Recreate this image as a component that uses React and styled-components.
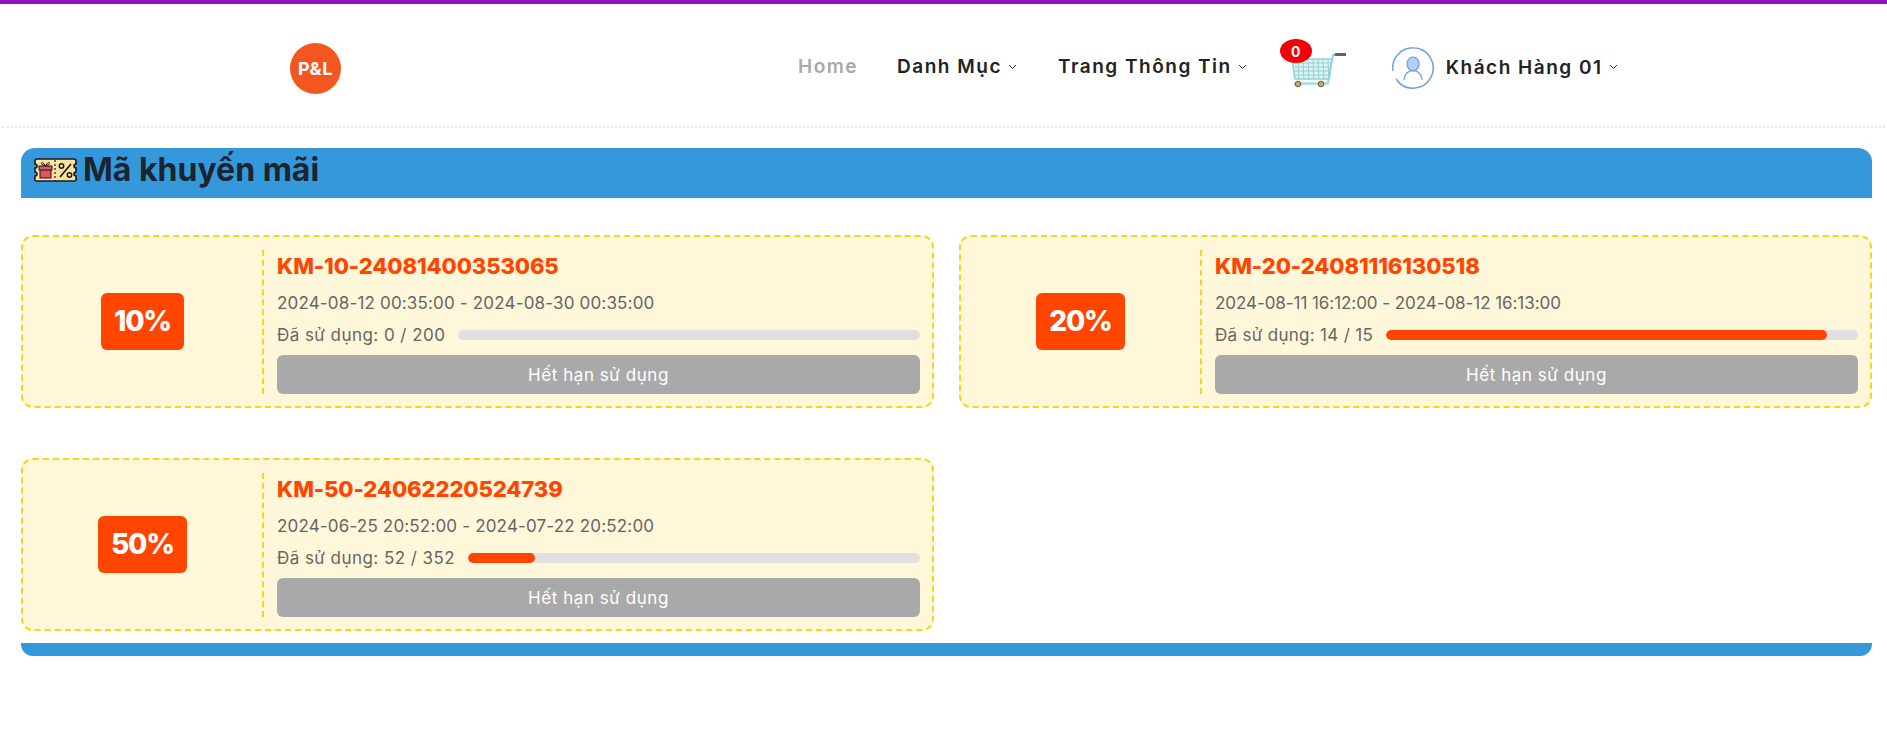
import React from "react";
import styled, { createGlobalStyle } from "styled-components";

const Global = createGlobalStyle`
  html, body { margin: 0; padding: 0; background: #fff; }
  body { font-family: Inter, "Open Sans", "Liberation Sans", sans-serif; }
  * { box-sizing: border-box; }
`;
const Page = styled.div`width: 1887px; min-height: 755px; border-top: 4px solid #8a14bf; background: #fff;`;
const Header = styled.header`
  height: 124px; display: flex; align-items: center; padding: 0 0 0 290px;
  border-bottom: 2px dotted #e8e8e8; margin: 0 2px;
`;
const Logo = styled.div`
  width: 51px; height: 51px; border-radius: 50%; background: #f4561f; color: #fff;
  display: flex; align-items: center; justify-content: center; font-size: 18px; font-weight: 700; letter-spacing: 0.6px;
  margin: 7px 0 0 -2px;
`;
const Nav = styled.nav`display: flex; align-items: center; margin: 3px 0 0 457px; height: 60px;`;
const NavLink = styled.span`
  display: flex; align-items: center; gap: 6px; font-size: 19px; font-weight: 600;
  color: ${p => p.$active ? "#a7a9aa" : "#222"}; letter-spacing: 1.5px; margin-right: ${p => p.$gap}px; white-space: nowrap;
`;
const Cart = styled.div`position: relative; width: 56px; height: 36px; margin: 7px 46px 0 0;`;
const CartBadge = styled.span`
  position: absolute; left: -10px; top: -13px; width: 32px; height: 24px; border-radius: 50%; background: #f40009;
  color: #fff; font-size: 14px; font-weight: 700; display: flex; align-items: center; justify-content: center;
`;
const UserName = styled(NavLink)`margin-left: 12px; margin-right: 0; margin-top: 1px;`;
const Content = styled.main`padding: 20px 15px 0 21px;`;
const Heading = styled.div`
  height: 50px; background: #3498db; border-radius: 14px 14px 0 0; padding: 0 0 6px 13px;
  display: flex; align-items: center; gap: 6px;
`;
const HeadingText = styled.h1`margin: 0; font-size: 32px; font-weight: 700; color: #1a2530; line-height: 44px; white-space: nowrap;`;
const Grid = styled.div`display: grid; grid-template-columns: 913px 913px; column-gap: 25px; row-gap: 50px; padding-top: 37px;`;
const Card = styled.article`
  height: 173px; background: #fff7d9; border: 2px dashed #f7d617; border-radius: 12px;
  display: grid; grid-template-columns: 241px 1fr; padding: 13px 12px 12px 0;
`;
const Discount = styled.div`display: flex; align-items: center; justify-content: center; border-right: 2px dashed #f7d617; padding-bottom: 2px;`;
const Badge = styled.span`
  height: 57px; padding: 0 13px; background: #ff4500; color: #fff; border-radius: 6px;
  display: flex; align-items: center; font-size: 28px; font-weight: 800; letter-spacing: -1.2px;
`;
const Body = styled.div`padding-left: 13px; display: flex; flex-direction: column;`;
const Code = styled.div`font-size: 22px; line-height: 32px; font-weight: 800; color: #ff4500; letter-spacing: -0.1px;`;
const Dates = styled.div`font-size: 17px; line-height: 24px; margin-top: 9px; color: #666; letter-spacing: ${p => p.$spacing}px;`;
const Usage = styled.div`display: flex; align-items: center; font-size: 17px; line-height: 24px; margin-top: 8px; color: #666; gap: 13px; white-space: nowrap; letter-spacing: ${p => p.$spacing}px;`;
const Track = styled.div`flex: 1; height: 10px; border-radius: 5px; background: #e0e0e0; overflow: hidden;`;
const Fill = styled.div`height: 100%; background: #ff4500; border-radius: 5px;`;
const Expired = styled.button`
  height: 39px; margin-top: 8px; border: 0; border-radius: 6px; background: #a9a9a9; color: #fff;
  font: 400 17px Inter, "Open Sans", sans-serif; letter-spacing: 0.55px; padding: 0; width: 100%;
`;
const Footer = styled.div`height: 13px; margin-top: 12px; background: #3498db; border-radius: 0 0 12px 12px;`;

const Caret = () => (
  <svg width="9" height="6" viewBox="0 0 9 6" fill="none" stroke="#333" strokeWidth="1"><path d="M1 1l3.5 3.5L8 1" /></svg>
);
const Ticket = () => (
  <svg width="43" height="25" viewBox="0 0 43 25">
    <path d="M3 1h37a2 2 0 0 1 2 2v3a2 2 0 0 0 0 4v4a2 2 0 0 0 0 4v2a2 2 0 0 1-2 3H3a2 2 0 0 1-2-3v-2a2 2 0 0 0 0-4v-4a2 2 0 0 0 0-4V3a2 2 0 0 1 2-2z" fill="#ffe29b" stroke="#141a22" strokeWidth="1.6" />
    <path d="M21 2v21" stroke="#141a22" strokeWidth="1.2" strokeDasharray="2 2" />
    <rect x="6" y="10" width="11" height="10" fill="#e2555f" stroke="#141a22" strokeWidth="1" />
    <rect x="5" y="8" width="13" height="4" fill="#e2555f" stroke="#141a22" strokeWidth="1" />
    <path d="M11.5 8C9 3 6.5 4 8 6.5L11.5 8c2.500-5 5-4 3.500-1.500z" fill="none" stroke="#141a22" strokeWidth="1" />
    <path d="M26 19L37 6" stroke="#141a22" strokeWidth="1.7" />
    <circle cx="27.500" cy="8" r="2.200" fill="none" stroke="#141a22" strokeWidth="1.500" />
    <circle cx="35.500" cy="17" r="2.200" fill="none" stroke="#141a22" strokeWidth="1.500" />
  </svg>
);
const CartArt = () => {
  const v = [8, 13, 18, 23, 28, 33, 38];
  const h = [11, 15, 19, 23];
  return (
    <svg width="56" height="36" viewBox="0 0 56 36" fill="none">
      <path d="M2 7L42 7L39 27H5z" fill="#dff3f3" stroke="#8fd2d8" strokeWidth="1.5" />
      {v.map(x => <path key={x} d={`M${x} 7l.8 20`} stroke="#8fd2d8" strokeWidth="1" />)}
      {h.map(y => <path key={y} d={`M3 ${y}H41`} stroke="#8fd2d8" strokeWidth="1" />)}
      <path d="M38 30l5-27h4" stroke="#8fd2d8" strokeWidth="1.8" />
      <path d="M46 2.500h9" stroke="#5b6078" strokeWidth="3" strokeLinecap="round" />
      <path d="M5 31.500H38" stroke="#a5dde0" strokeWidth="2.500" strokeLinecap="round" />
      <circle cx="8" cy="32" r="2.800" fill="#c8a968" stroke="#6d5d3a" strokeWidth="1" />
      <circle cx="31" cy="32" r="2.800" fill="#c8a968" stroke="#6d5d3a" strokeWidth="1" />
    </svg>
  );
};
const AvatarIcon = styled.svg`margin-top: 3px; flex: none;`;
const Avatar = () => (
  <AvatarIcon width="42" height="42" viewBox="0 0 42 42" fill="none">
    <path d="M21 .8A20.200 20.200 0 1 1 4 32M.9 24A20.200 20.200 0 0 1 21 .8" stroke="#6ba3e4" strokeWidth="1.500" />
    <ellipse cx="21" cy="17" rx="6" ry="6.800" fill="#b5cff4" stroke="#6ba3e4" strokeWidth="1.300" />
    <path d="M12 33c0-5.500 4-9.500 9-9.500s9 4 9 9.500" stroke="#6ba3e4" strokeWidth="1.300" />
  </AvatarIcon>
);

const coupons = [
  { code: "KM-10-24081400353065", pct: "10%", from: "2024-08-12 00:35:00", to: "2024-08-30 00:35:00", used: 0, total: 200, dateSp: 0.17, useSp: 0.45 },
  { code: "KM-20-24081116130518", pct: "20%", from: "2024-08-11 16:12:00", to: "2024-08-12 16:13:00", used: 14, total: 15, dateSp: -0.06, useSp: 0.3 },
  { code: "KM-50-24062220524739", pct: "50%", from: "2024-06-25 20:52:00", to: "2024-07-22 20:52:00", used: 52, total: 352, dateSp: 0.17, useSp: 0.45 },
];

export default function App() {
  return (
    <Page>
      <Global />
      <Header>
        <Logo>P&amp;L</Logo>
        <Nav>
          <NavLink $active $gap={39}>Home</NavLink>
          <NavLink $gap={41}>Danh Mục <Caret /></NavLink>
          <NavLink $gap={43}>Trang Thông Tin <Caret /></NavLink>
          <Cart><CartArt /><CartBadge>0</CartBadge></Cart>
          <Avatar />
          <UserName $gap={0}>Khách Hàng 01 <Caret /></UserName>
        </Nav>
      </Header>
      <Content>
        <Heading><Ticket /><HeadingText>Mã khuyến mãi</HeadingText></Heading>
        <Grid>
          {coupons.map(c => (
            <Card key={c.code}>
              <Discount><Badge>{c.pct}</Badge></Discount>
              <Body>
                <Code>{c.code}</Code>
                <Dates $spacing={c.dateSp}>{c.from} - {c.to}</Dates>
                <Usage $spacing={c.useSp}>
                  <span>Đã sử dụng: {c.used} / {c.total}</span>
                  <Track><Fill style={{ width: `${(c.used / c.total) * 100}%` }} /></Track>
                </Usage>
                <Expired>Hết hạn sử dụng</Expired>
              </Body>
            </Card>
          ))}
        </Grid>
        <Footer />
      </Content>
    </Page>
  );
}
